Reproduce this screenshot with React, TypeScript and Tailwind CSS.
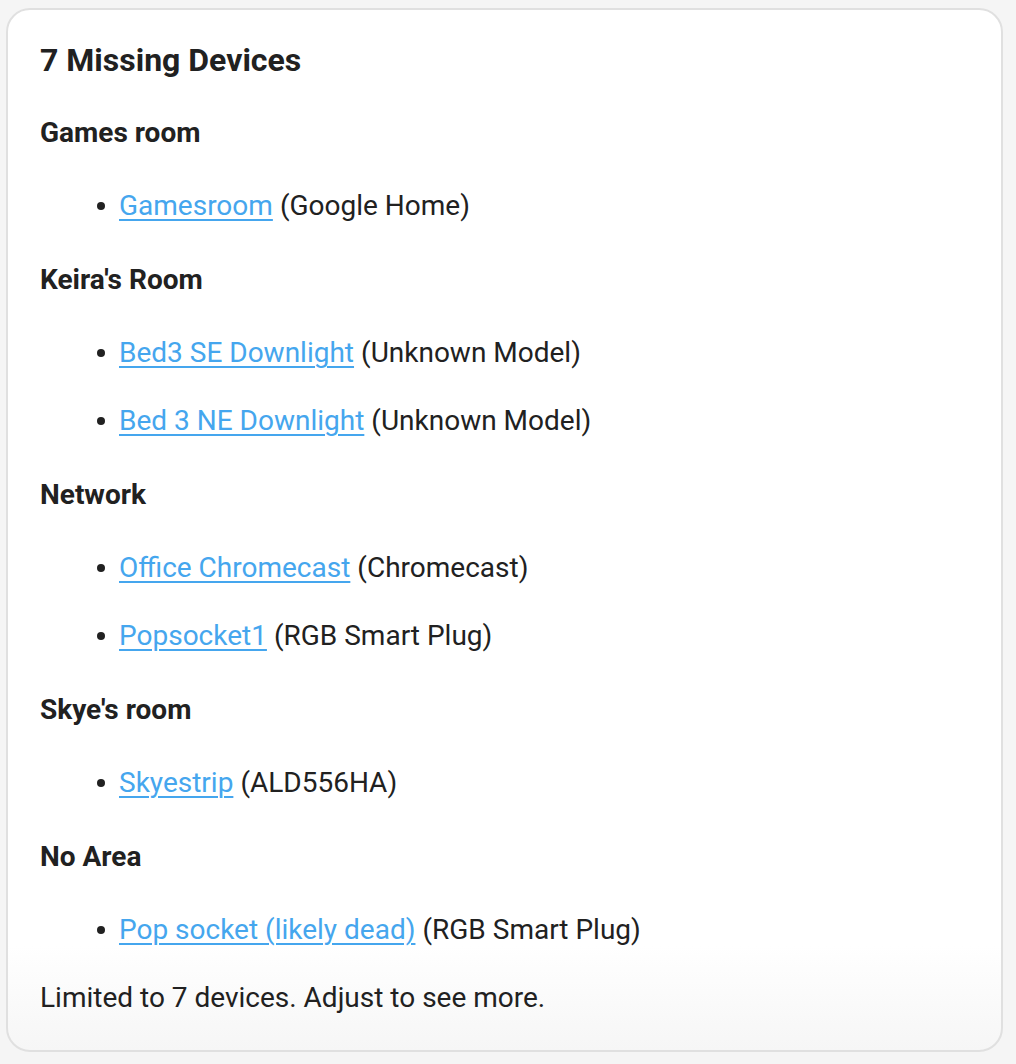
import React from "react";

type Device = { name: string; model: string };
type Area = { area: string; devices: Device[] };

const areas: Area[] = [
  { area: "Games room", devices: [{ name: "Gamesroom", model: "Google Home" }] },
  {
    area: "Keira's Room",
    devices: [
      { name: "Bed3 SE Downlight", model: "Unknown Model" },
      { name: "Bed 3 NE Downlight", model: "Unknown Model" },
    ],
  },
  {
    area: "Network",
    devices: [
      { name: "Office Chromecast", model: "Chromecast" },
      { name: "Popsocket1", model: "RGB Smart Plug" },
    ],
  },
  { area: "Skye's room", devices: [{ name: "Skyestrip", model: "ALD556HA" }] },
  {
    area: "No Area",
    devices: [{ name: "Pop socket (likely dead)", model: "RGB Smart Plug" }],
  },
];

export default function App() {
  return (
    <div className="min-h-[1064px] bg-[#f5f5f5] pt-[8px] pl-[6px] pr-[13px] pb-[12px] font-['Roboto',sans-serif] text-[#212121]">
      <div className="h-[1044px] rounded-[24px] border-2 border-[#e0e0e0] bg-gradient-to-b from-white from-90% to-[#f6f6f6] px-[32px] pt-[30px]">
        <h2 className="text-[32px] leading-[40px] font-bold">7 Missing Devices</h2>

        {areas.map((a, i) => (
          <section key={a.area} className={i === 0 ? "mt-[33px]" : "mt-[34px]"}>
            <h3 className="text-[28px] leading-[40px] font-bold">{a.area}</h3>
            <ul className="mt-[33px] flex flex-col gap-[28px] pl-[57px]">
              {a.devices.map((d) => (
                <li key={d.name} className="flex items-center text-[28px] leading-[40px]">
                  <span className="mr-[14px] h-[8px] w-[8px] shrink-0 rounded-full bg-[#212121]" />
                  <a
                    href="#"
                    className="text-[#45a6ee] underline decoration-2 underline-offset-[4px]"
                  >
                    {d.name}
                  </a>
                  <span className="ml-[7px]">({d.model})</span>
                </li>
              ))}
            </ul>
          </section>
        ))}

        <p className="mt-[28px] text-[28px] leading-[40px]">
          Limited to 7 devices. Adjust to see more.
        </p>
      </div>
    </div>
  );
}
